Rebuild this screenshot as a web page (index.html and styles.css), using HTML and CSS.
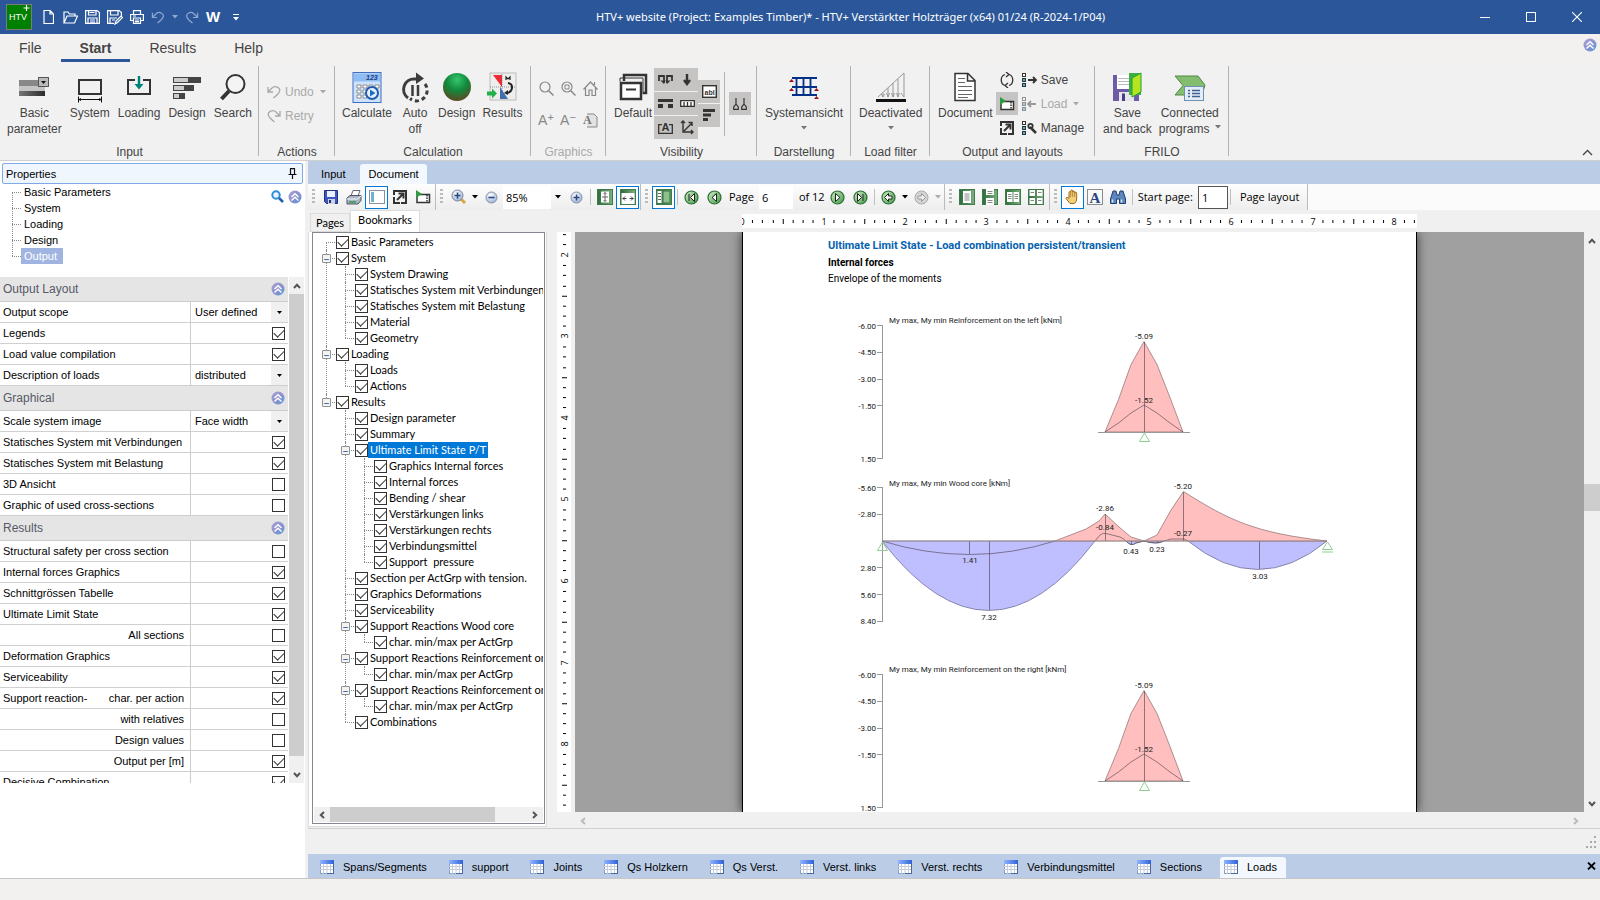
FILE: index.html
```html
<!DOCTYPE html>
<html lang="en">
<head>
    <meta charset="UTF-8">
    <meta name="viewport" content="width=device-width, initial-scale=1.0">
    <title>HTV+ website (Project: Examples Timber)</title>
    <link rel="stylesheet" href="styles.css">
</head>
<body>
    <!-- shared icons -->
    <svg class="sprite" aria-hidden="true">
        <defs>
            <linearGradient id="gBadge" x1="0" y1="0" x2="1" y2="1">
                <stop offset="0" stop-color="#a9a3d6"/><stop offset=".55" stop-color="#8b90cc"/><stop offset="1" stop-color="#4f9fdc"/>
            </linearGradient>
            <linearGradient id="gGreen" x1="0" y1="0" x2="1" y2="1">
                <stop offset="0" stop-color="#d3eec8"/><stop offset="1" stop-color="#3f9a45"/>
            </linearGradient>
            <linearGradient id="gDark" x1="0" y1="0" x2="1" y2="0">
                <stop offset="0" stop-color="#2c6b3a"/><stop offset="1" stop-color="#7db07f"/>
            </linearGradient>
            <linearGradient id="gTable" x1="0" y1="0" x2="1" y2="0">
                <stop offset="0" stop-color="#8fb4ff"/><stop offset="1" stop-color="#2f62d8"/>
            </linearGradient>
            <linearGradient id="gBar" x1="0" y1="0" x2="1" y2="0">
                <stop offset="0" stop-color="#777"/><stop offset="1" stop-color="#2b2b2b"/>
            </linearGradient>
            <radialGradient id="gBall" cx=".5" cy=".25" r=".75">
                <stop offset="0" stop-color="#35c56c"/><stop offset=".5" stop-color="#128a3d"/><stop offset="1" stop-color="#5b4a22"/>
            </radialGradient>
            <radialGradient id="gRound" cx=".4" cy=".3" r=".8">
                <stop offset="0" stop-color="#fff"/><stop offset="1" stop-color="#8fa9d6"/>
            </radialGradient>
        </defs>
        <symbol id="collapse" viewBox="0 0 14 14">
            <circle cx="7" cy="7" r="6.5" fill="url(#gBadge)"/>
            <path d="M3.5 7 7 3.8 10.5 7M3.5 10.5 7 7.3l3.5 3.2" fill="none" stroke="#fff" stroke-width="1.4"/>
        </symbol>
        <symbol id="caret" viewBox="0 0 6 4"><path d="M0 0h6L3 3.5z" fill="currentColor"/></symbol>
        <symbol id="chev" viewBox="0 0 8 6"><path d="M1 5 4 1.8 7 5" fill="none" stroke="currentColor" stroke-width="2"/></symbol>
        <symbol id="undo" viewBox="0 0 14 14">
            <path d="M1 2v5h5M1 7l4-4c3-3 9-.5 7.500 3.500C12 8 9 11 6.500 13" fill="none" stroke="currentColor" stroke-width="1.3"/>
        </symbol>
        <symbol id="redo" viewBox="0 0 14 14">
            <path d="M13 2v5H8M13 7 9 3C6 0 0 2.500 1.500 6.500 2 8 5 11 7.500 13" fill="none" stroke="currentColor" stroke-width="1.3"/>
        </symbol>
        <symbol id="table" viewBox="0 0 14 14">
            <rect x=".5" y=".5" width="13" height="13" fill="#fff" stroke="#8d9fc0"/>
            <rect width="14" height="4" fill="url(#gTable)"/>
            <path d="M0 6.500h14M0 9.500h14M3.500 4v10M7 4v10M10.500 4v10" stroke="#c3ccdc" stroke-width="1"/>
            <path d="M13.500 4v10M7 13.500h7" stroke="#4c6799"/>
        </symbol>
        <symbol id="layout" viewBox="0 0 15 14">
            <g fill="#fff" stroke="#333"><rect x=".5" y=".5" width="3" height="3"/><rect x=".5" y="5.500" width="3" height="3" fill="#4db1e4"/><rect x=".5" y="10.500" width="3" height="3" fill="#4db1e4"/></g>
        </symbol>
        <symbol id="slide" viewBox="0 0 16 14">
            <path d="M5 4.500h9.500v8H2V6" fill="#fff" stroke="#333" stroke-width="1.500"/>
            <path d="M12 5v7" stroke="#333" stroke-width="1.500" stroke-dasharray="1.500 1"/>
            <path d="M1 0v8l6-4z" fill="#2f9a3f"/>
        </symbol>
        <symbol id="popout" viewBox="0 0 14 14">
            <path d="M0 0h14v14H8v-2h4V2H2v3H0z" fill="#333"/>
            <path d="M1 7v6h6" fill="none" stroke="#333" stroke-width="2"/>
            <path d="M5.500 3.500h5v5M10 4l-6 6" fill="none" stroke="#333" stroke-width="2"/>
        </symbol>
        <symbol id="ball" viewBox="0 0 15 15">
            <circle cx="7.500" cy="7.500" r="6.500" fill="url(#gGreen)" stroke="#2c6e34" stroke-width="1.200"/>
        </symbol>
        <symbol id="lens" viewBox="0 0 13 13"><circle cx="6.500" cy="6.500" r="5.500" fill="url(#gRound)" stroke="#8790a3"/></symbol>
        <symbol id="flag" viewBox="0 0 16 16"><rect x=".5" y=".5" width="15" height="15" fill="url(#gDark)" stroke="#3f7a49"/></symbol>
    </svg>

    <header class="titlebar">
        <div class="quick">
            <svg class="app-icon" width="26" height="26" viewBox="0 0 26 26">
                <rect x=".5" y=".5" width="25" height="25" fill="#008000" stroke="#7b7b7b"/>
                <text x="3" y="16" font-size="9" fill="#fff">HTV</text>
                <path d="M20.500 1v6M17.500 4h6" stroke="#fff" stroke-width="1.200"/>
            </svg>
            <button class="q-new" aria-label="New"><svg width="11" height="14" viewBox="0 0 11 14"><path d="M1 .5h6l3.500 3.500v9.500H1zM7 .5V4h3.500" fill="none" stroke="#fff" stroke-width="1.200"/></svg></button>
            <button aria-label="Open"><svg width="15" height="13" viewBox="0 0 15 13"><path d="M1 12V1h4l1.500 2H12v2M1 12l3-7h10.500l-3 7z" fill="none" stroke="#fff" stroke-width="1.200"/></svg></button>
            <button aria-label="Save"><svg width="15" height="14" viewBox="0 0 15 14"><path d="M.6.600h11.500l2.300 2v10.800H.6zM3.500.600V5h7.500V.600M3 13V8h9v5M4.500 2.500h5M5 10h5M5 12h5" fill="none" stroke="#fff" stroke-width="1.200"/></svg></button>
            <button aria-label="Save as"><svg width="16" height="15" viewBox="0 0 16 15"><path d="M7 13.400H.6V.600h11.500l2.300 2V6M3.500.600V5h7.500V.600M3 13V8h7M5 10h3M8 14l1-3 5-5 1.500 1.500-5 5z" fill="none" stroke="#fff" stroke-width="1.200"/></svg></button>
            <button aria-label="Print"><svg width="14" height="14" viewBox="0 0 14 14"><path d="M3.500 4V.600h7V4M3 10.500H.6V4.500h12.800v6H11M3.500 8h7v5.400h-7zM5 10h4M5 11.700h4M3 6h3" fill="none" stroke="#fff" stroke-width="1.200"/></svg></button>
            <button class="dim" aria-label="Undo"><svg width="14" height="13"><use href="#undo"/></svg><svg width="6" height="4"><use href="#caret"/></svg></button>
            <button class="dim" aria-label="Redo"><svg width="14" height="13"><use href="#redo"/></svg></button>
            <button class="word" aria-label="Word">W</button>
            <button class="q-more" aria-label="Customize"><svg width="6" height="7" viewBox="0 0 6 7"><path d="M0 .5h6" stroke="#fff"/><path d="M0 3h6L3 6.500z" fill="#fff"/></svg></button>
        </div>
        <div class="window-title">HTV+ website (Project: Examples Timber)* - HTV+ Verstärkter Holzträger (x64) 01/24 (R-2024-1/P04)</div>
        <div class="window-buttons">
            <button aria-label="Minimize"><svg width="10" height="10"><path d="M0 5.500h10" stroke="#fff"/></svg></button>
            <button aria-label="Maximize"><svg width="10" height="10"><rect x=".5" y=".5" width="9" height="9" fill="none" stroke="#fff"/></svg></button>
            <button aria-label="Close"><svg width="10" height="10"><path d="M0 0l10 10M10 0 0 10" stroke="#fff" stroke-width="1.100"/></svg></button>
        </div>
    </header>

    <nav class="ribbon-tabs">
        <a href="#file">File</a>
        <a href="#start" class="active">Start</a>
        <a href="#results">Results</a>
        <a href="#help">Help</a>
        <button class="ribbon-help" aria-label="Collapse"><svg width="14" height="14"><use href="#collapse"/></svg></button>
    </nav>

    <div class="ribbon">
        <section class="group g-input">
            <div class="group-body">
                <button class="big"><svg width="32" height="32" viewBox="0 0 32 32"><rect x="1" y="9" width="26" height="6" fill="#888"/><rect x="1" y="15" width="26" height="5" fill="#c4c4c4"/><rect x="1" y="20" width="26" height="5" fill="url(#gBar)"/><rect x="20.500" y="6.500" width="10" height="9" fill="#bbb" stroke="#555"/><path d="M23 10h5l-2.500 3z" fill="#111"/></svg>Basic<br>parameter</button>
                <button class="big"><svg width="32" height="32" viewBox="0 0 32 32"><rect x="5" y="9" width="22" height="14" fill="none" stroke="#333" stroke-width="2"/><path d="M4 28.500h24M4.500 25.500v6M27.500 25.500v6" stroke="#111"/><path d="M4 28.500l3-1.500v3zM28 28.500l-3-1.500v3z" fill="#111"/></svg>System</button>
                <button class="big"><svg width="32" height="32" viewBox="0 0 32 32"><path d="M12 9H5v14h22V9h-7" fill="none" stroke="#333" stroke-width="2"/><path d="M14.800 5h2.400v8h3.300L16 18.500 11.500 13h3.300z" fill="#00827c"/></svg>Loading</button>
                <button class="big"><svg width="32" height="32" viewBox="0 0 32 32"><g stroke="#444"><rect x="2.500" y="6.500" width="27" height="5" fill="#444"/><rect x="2.500" y="6.500" width="15" height="5" fill="#ccc"/><rect x="2.500" y="14.500" width="20" height="5" fill="#444"/><rect x="2.500" y="14.500" width="11" height="5" fill="#ccc"/><rect x="2.500" y="22.500" width="11" height="5" fill="#444"/><rect x="2.500" y="22.500" width="6" height="5" fill="#ccc"/></g></svg>Design</button>
                <button class="big"><svg width="32" height="32" viewBox="0 0 32 32"><circle cx="18.500" cy="13" r="9" fill="#f4f4f4" stroke="#333" stroke-width="2"/><path d="M12 20 4.500 28" stroke="#333" stroke-width="4"/></svg>Search</button>
            </div>
            <h2>Input</h2>
        </section>

        <section class="group g-actions">
            <div class="group-body">
                <div class="rows tall">
                    <button disabled><svg width="14" height="14"><use href="#undo"/></svg>Undo<svg class="gap" width="6" height="4"><use href="#caret"/></svg></button>
                    <button disabled><svg width="14" height="14"><use href="#redo"/></svg>Retry</button>
                </div>
            </div>
            <h2>Actions</h2>
        </section>

        <section class="group g-calc">
            <div class="group-body">
                <button class="big"><svg width="32" height="32" viewBox="0 0 32 32"><rect x="2" y="1.500" width="28" height="30" fill="#cfe2fb" stroke="#3c6fc4"/><rect x="3" y="2.500" width="26" height="8" fill="#8fbcf5"/><text x="15" y="9" font-size="7" font-weight="bold" font-style="italic" fill="#1d3c7c">123</text><g fill="#fff" stroke="#777" stroke-width=".8"><path d="M6 14h4v3H6zM12 14h4v3h-4zM18 14h4v3h-4zM24 14h4v3h-4zM6 19h4v3H6zM12 19h4v3h-4zM6 24h4v3H6zM12 24h4v3h-4z"/></g><circle cx="21" cy="22" r="6" fill="#e5f2ff" stroke="#245cac" stroke-width="2"/><path d="M19 18.500v7l5.500-3.500z" fill="#1d6ec4"/></svg>Calculate</button>
                <button class="big"><svg width="32" height="32" viewBox="0 0 32 32"><path d="M9 27A10.500 10.500 0 0 1 16 8h3" fill="none" stroke="#3c3c3c" stroke-width="3"/><path d="M17 1.500 25 7.500 17 13z" fill="#3c3c3c"/><path d="M26 13a10.500 10.500 0 0 1-15 14.500" fill="none" stroke="#3c3c3c" stroke-width="3" stroke-dasharray="4 3"/><path d="M13.500 14v11M19 14v11" stroke="#3c3c3c" stroke-width="2.500"/></svg>Auto<br>off</button>
                <button class="big"><svg width="32" height="32" viewBox="0 0 32 32"><circle cx="16" cy="16" r="14" fill="url(#gBall)"/></svg>Design</button>
                <button class="big"><svg width="32" height="32" viewBox="0 0 32 32"><rect x="4" y="2" width="26" height="27" fill="#efeeec" stroke="#bbb"/><path d="M7 4h9v12z" fill="#ee2b35"/><path d="M14 16v12h8z" fill="#3d70b5"/><path d="M16 3v26M4 16h26" stroke="#555" stroke-width=".6" stroke-dasharray="1 1"/><path d="M22 12c6 1 5 9-1 10" fill="none" stroke="#222" stroke-width="2"/><path d="M18 22l4-3v5z" fill="#222"/><path d="M20 9V6l2 2 2-2v3" fill="none" stroke="#222" stroke-width="1.200"/><path d="M1 20.500h5v-3l5 5-5 5v-3H1z" fill="#20b14b"/></svg>Results</button>
            </div>
            <h2>Calculation</h2>
        </section>

        <section class="group g-graphics">
            <div class="group-body">
                <div class="icon-grid">
                    <button disabled aria-label="Zoom"><svg width="15" height="15" viewBox="0 0 15 15"><circle cx="6" cy="6" r="5" fill="none" stroke="#888" stroke-width="1.200"/><path d="M9.500 9.500l5 5" stroke="#888" stroke-width="1.500"/></svg></button>
                    <button disabled aria-label="Zoom window"><svg width="15" height="15" viewBox="0 0 15 15"><circle cx="6" cy="6" r="5" fill="none" stroke="#888" stroke-width="1.200"/><path d="M4 4h4v4H4z" fill="none" stroke="#888"/><path d="M9.500 9.500l5 5" stroke="#888" stroke-width="1.500"/></svg></button>
                    <button disabled aria-label="Home"><svg width="15" height="15" viewBox="0 0 15 15"><path d="M.5 8.500 7.500 1l7 7.500M2.500 7v7.500H6V9h3v5.500h3.500V7M11.500 1v3" fill="none" stroke="#888" stroke-width="1.200"/></svg></button>
                    <button disabled class="letter">A<sup>+</sup></button>
                    <button disabled class="letter">A<sup>−</sup></button>
                    <button disabled aria-label="Font page"><svg width="15" height="15" viewBox="0 0 15 15"><path d="M4 1h7l3 3v10H4" fill="#e2e2e2" stroke="#888"/><text x="0" y="11" font-size="12" font-weight="bold" font-family="Liberation Serif" fill="#777">A</text></svg></button>
                </div>
            </div>
            <h2 class="off">Graphics</h2>
        </section>

        <section class="group g-vis">
            <div class="group-body">
                <button class="big"><svg width="32" height="32" viewBox="0 0 32 32"><rect x="7" y="4" width="22" height="18" fill="none" stroke="#333" stroke-width="2.500"/><rect x="2" y="10" width="24" height="20" fill="#f1f1f1"/><rect x="4" y="12" width="20" height="16" fill="#fff" stroke="#333" stroke-width="2.500"/><path d="M3 10.500V7h23v16" fill="none" stroke="#333"/><path d="M9 18.500h10" stroke="#333" stroke-width="2"/></svg>Default</button>
                <div class="toggles two">
                    <button aria-label="Loads"><svg width="15" height="12" viewBox="0 0 15 12"><path d="M1 7V2h5v7M9 9V2h5v5" fill="none" stroke="#333" stroke-width="1.800"/><path d="M2.500 6.500h5L6 10zM7.500 6.500h5L9 10z" fill="#333"/></svg></button>
                    <button aria-label="Point load"><svg width="8" height="12" viewBox="0 0 8 12"><path d="M4 0v9M1 6l3 4 3-4" fill="none" stroke="#333" stroke-width="2.400"/></svg></button>
                    <button aria-label="Supports"><svg width="15" height="9" viewBox="0 0 15 9"><path d="M0 1.500h15" stroke="#333" stroke-width="3"/><path d="M0 5h5v4H0zM10 5h5v4h-5z" fill="#333"/></svg></button>
                    <button aria-label="Dimensions"><svg width="15" height="7" viewBox="0 0 15 7"><path d="M.7.700h13.600v5.600H.7zM4 2v4M7.500 2v4M11 2v4" fill="#fff" stroke="#333" stroke-width="1.300"/></svg></button>
                    <button aria-label="Labels"><svg width="15" height="13" viewBox="0 0 15 13"><path d="M4 3.700H.7v8.600h13.600V3.700H11" fill="none" stroke="#333" stroke-width="1.300"/><text x="3.500" y="9.500" font-size="11" font-weight="bold" fill="#333">A</text></svg></button>
                    <button aria-label="Axes"><svg width="14" height="15" viewBox="0 0 14 15"><path d="M3 1v11h10M1 3l2-2 2 2M11 10l2 2-2 2M4 11l8-8M8.500 2.500H12V6" fill="none" stroke="#333" stroke-width="1.400"/></svg></button>
                </div>
                <div class="toggles one">
                    <button aria-label="Text"><svg width="15" height="13" viewBox="0 0 15 13"><rect x=".7" y=".7" width="13.600" height="11.600" fill="#fff" stroke="#333" stroke-width="1.400"/><text x="2.500" y="9.500" font-size="7" font-weight="bold" fill="#333">abl</text></svg></button>
                    <button aria-label="Utilization"><svg width="12" height="13" viewBox="0 0 12 13"><path d="M0 1.500h12M0 6h8M0 10.500h5" stroke="#333" stroke-width="3"/></svg></button>
                </div>
                <span class="short-rule"></span>
                <div class="toggles lone">
                    <button aria-label="Spacing"><svg width="14" height="12" viewBox="0 0 14 12"><path d="M3 0v6l-2.300 3v2.300h4.600V9L3 6M11 0v6l-2.300 3v2.300h4.600V9L11 6" fill="none" stroke="#333" stroke-width="1.200"/></svg></button>
                </div>
            </div>
            <h2>Visibility</h2>
        </section>

        <section class="group g-view">
            <div class="group-body">
                <button class="big"><svg width="32" height="32" viewBox="0 0 32 32"><path d="M4 7h25M4 16h25M4 24h25M8.500 7v17M15.500 7v17M22.500 7v17" stroke="#003087" stroke-width="1.800"/><path d="M1 11l2.500-3L6 11zM1 20l2.500-3L6 20zM26 20l2.500-3 2.500 3zM26 28l2.500-3 2.500 3z" fill="#a1101c"/></svg>Systemansicht<svg class="drop" width="6" height="4"><use href="#caret"/></svg></button>
            </div>
            <h2>Darstellung</h2>
        </section>

        <section class="group g-filter">
            <div class="group-body">
                <button class="big"><svg width="32" height="32" viewBox="0 0 32 32"><path d="M3 26 29 2v24M8 22v4M13 17v9M18 12v14M23 8v18M6.500 23l1.500 3 1.500-3M11.500 22l1.500 4 1.500-4M16.500 22l1.500 4 1.500-4M21.500 22l1.500 4 1.500-4M26 22l3 4" fill="none" stroke="#999"/><path d="M1 29.500h30" stroke="#111" stroke-width="3"/></svg>Deactivated<svg class="drop" width="6" height="4"><use href="#caret"/></svg></button>
            </div>
            <h2>Load filter</h2>
        </section>

        <section class="group g-output">
            <div class="group-body">
                <button class="big"><svg width="32" height="32" viewBox="0 0 32 32"><path d="M6 2.500h13l7 7v20H6zM18.500 3v7h7" fill="#fff" stroke="#333" stroke-width="1.500"/><path d="M9 7.500h7M9 11.500h7M9 15.500h14M9 19.500h14M9 23.500h14M9 26.500h10" stroke="#666"/></svg>Document</button>
                <div class="toggles plain">
                    <button aria-label="Refresh"><svg width="14" height="16" viewBox="0 0 14 16"><path d="M5 2.500C0 4 0 12 5 13.500M9 2.500c5 1.500 5 9.500 0 11M6 0l3 2.500L6 5M8 11l-3 2.500L8 16" fill="none" stroke="#333" stroke-width="1.300"/></svg></button>
                    <button class="on" aria-label="Slide"><svg width="16" height="14"><use href="#slide"/></svg></button>
                    <button aria-label="Pop out"><svg width="14" height="14"><use href="#popout"/></svg></button>
                </div>
                <div class="rows">
                    <button><svg width="15" height="14" viewBox="0 0 15 14"><use href="#layout" width="15" height="14"/><path d="M6 7h8M11 4l3 3-3 3" fill="none" stroke="#333" stroke-width="1.800"/></svg>Save</button>
                    <button disabled><svg width="15" height="14" viewBox="0 0 15 14"><use href="#layout" width="15" height="14" opacity=".5"/><path d="M14 7H6M9 4 6 7l3 3" fill="none" stroke="#999" stroke-width="1.800"/></svg>Load<svg class="gap" width="6" height="4"><use href="#caret"/></svg></button>
                    <button><svg width="15" height="14" viewBox="0 0 15 14"><use href="#layout" width="15" height="14"/><path d="M8 6l6 6" stroke="#333" stroke-width="2.500"/><circle cx="8.500" cy="5" r="2.200" fill="none" stroke="#333" stroke-width="1.800"/></svg>Manage</button>
                </div>
            </div>
            <h2>Output and layouts</h2>
        </section>

        <section class="group g-frilo">
            <div class="group-body">
                <button class="big"><svg width="32" height="32" viewBox="0 0 32 32"><path d="M2 4h26v26H2z" fill="#6f5aa8"/><rect x="6" y="4" width="17" height="14" fill="#fff"/><path d="M7 7.500h13M7 10.500h13M7 13.500h13" stroke="#bbb"/><rect x="8" y="21" width="15" height="9" fill="#e5e5ea"/><path d="M11 22.500h3V30h-3z" fill="#4b3a86"/><path d="M18 2h12v22H18z" fill="#3cb043"/><path d="M21 7l9-5v19l-9 5z" fill="#b5e61d" stroke="#1f9e3c"/></svg>Save<br>and back</button>
                <button class="big"><svg width="32" height="32" viewBox="0 0 32 32"><path d="M1 5h23l7 9-3 10H1l8-9.500z" fill="#84bd6f" stroke="#4d8a41"/><rect x="10.500" y="15.500" width="19" height="14" fill="#e4edf7" stroke="#6d90b6"/><path d="M14 19.500h2M18 19.500h8M14 22.500h2M18 22.500h8M14 25.500h2M18 25.500h8" stroke="#3f5f8f" stroke-width="1.300"/></svg>Connected<span>programs <svg width="6" height="8" viewBox="0 0 6 8"><path d="M0 0h6L3 3.500z" fill="#777"/></svg></span></button>
            </div>
            <h2>FRILO</h2>
        </section>
        <button class="ribbon-fold" aria-label="Fold ribbon"><svg width="11" height="7" viewBox="0 0 11 7"><path d="M1 6l4.500-4.500L10 6" fill="none" stroke="#444" stroke-width="1.300"/></svg></button>
    </div>

    <main>
        <aside class="properties">
            <div class="prop-head">Properties<svg width="9" height="11" viewBox="0 0 9 11"><path d="M2.500.500v5.500M6.500.500V6M2 .7h5M.5 6.500h8M4.500 7v4" stroke="#111" stroke-width="1.200" fill="none"/></svg></div>
            <div class="prop-nav">
                <ul>
                    <li><a href="#basic">Basic Parameters</a></li>
                    <li><a href="#system">System</a></li>
                    <li><a href="#loading">Loading</a></li>
                    <li><a href="#design">Design</a></li>
                    <li><a href="#output" class="current">Output</a></li>
                </ul>
                <button aria-label="Find"><svg width="13" height="13" viewBox="0 0 13 13"><circle cx="5" cy="5" r="3.700" fill="#eaf5ff" stroke="#2b8bdc" stroke-width="2"/><path d="M8 8l4 4" stroke="#1f5fb0" stroke-width="2.500"/></svg></button>
                <button aria-label="Collapse all"><svg width="14" height="14"><use href="#collapse"/></svg></button>
            </div>
            <div class="prop-scroll">
                <form class="prop-grid">
                    <h3>Output Layout<svg width="14" height="14"><use href="#collapse"/></svg></h3>
                    <div class="prop"><label for="p1">Output scope</label><select id="p1"><option>User defined</option></select></div>
                    <div class="prop"><label for="p2">Legends</label><input type="checkbox" id="p2" checked></div>
                    <div class="prop"><label for="p3">Load value compilation</label><input type="checkbox" id="p3" checked></div>
                    <div class="prop"><label for="p4">Description of loads</label><select id="p4"><option>distributed</option></select></div>
                    <h3>Graphical<svg width="14" height="14"><use href="#collapse"/></svg></h3>
                    <div class="prop"><label for="p5">Scale system image</label><select id="p5"><option>Face width</option></select></div>
                    <div class="prop"><label for="p6">Statisches System mit Verbindungen</label><input type="checkbox" id="p6" checked></div>
                    <div class="prop"><label for="p7">Statisches System mit Belastung</label><input type="checkbox" id="p7" checked></div>
                    <div class="prop"><label for="p8">3D Ansicht</label><input type="checkbox" id="p8"></div>
                    <div class="prop"><label for="p9">Graphic of used cross-sections</label><input type="checkbox" id="p9"></div>
                    <h3>Results<svg width="14" height="14"><use href="#collapse"/></svg></h3>
                    <div class="prop"><label for="p10">Structural safety per cross section</label><input type="checkbox" id="p10"></div>
                    <div class="prop"><label for="p11">Internal forces Graphics</label><input type="checkbox" id="p11" checked></div>
                    <div class="prop"><label for="p12">Schnittgrössen Tabelle</label><input type="checkbox" id="p12" checked></div>
                    <div class="prop"><label for="p13">Ultimate Limit State</label><input type="checkbox" id="p13" checked></div>
                    <div class="prop sub"><label for="p14">All sections</label><input type="checkbox" id="p14"></div>
                    <div class="prop"><label for="p15">Deformation Graphics</label><input type="checkbox" id="p15" checked></div>
                    <div class="prop"><label for="p16">Serviceability</label><input type="checkbox" id="p16" checked></div>
                    <div class="prop pair"><label for="p17"><span>Support reaction-</span><span>char. per action</span></label><input type="checkbox" id="p17" checked></div>
                    <div class="prop sub"><label for="p18">with relatives</label><input type="checkbox" id="p18"></div>
                    <div class="prop sub"><label for="p19">Design values</label><input type="checkbox" id="p19"></div>
                    <div class="prop sub"><label for="p20">Output per [m]</label><input type="checkbox" id="p20" checked></div>
                    <div class="prop"><label for="p21">Decisive Combination</label><input type="checkbox" id="p21" checked></div>
                </form>
                <div class="scroll vertical">
                    <button aria-label="Scroll up"><svg width="8" height="6"><use href="#chev"/></svg></button>
                    <span class="thumb" style="flex-grow: 463"></span>
                    <span style="flex-grow: 10"></span>
                    <button class="down" aria-label="Scroll down"><svg width="8" height="6"><use href="#chev"/></svg></button>
                </div>
            </div>
        </aside>

        <section class="workspace">
            <nav class="view-tabs">
                <a href="#input">Input</a>
                <a href="#document" class="active">Document</a>
            </nav>

            <div class="toolbar">
                <div class="tools">
                    <button aria-label="Save"><svg width="14" height="14" viewBox="0 0 14 14"><path d="M.5.500h13v13h-11l-2-2z" fill="#3f55c0" stroke="#20307c"/><rect x="3" y="1" width="8" height="6" fill="#e9f0ff"/><rect x="4" y="9" width="7" height="5" fill="#cdd3e3"/><path d="M5 10h2v3H5z" fill="#20307c"/></svg></button>
                    <button aria-label="Print"><svg width="16" height="15" viewBox="0 0 16 15"><path d="M5 6l2-5.500h7L12 6z" fill="#fff" stroke="#667"/><path d="M1 8l3-2.500h11v5L12 14H1z" fill="#a9b4c4" stroke="#4c5666"/><path d="M1 9h10.500L15 6" fill="none" stroke="#fff"/><path d="M3 12h7" stroke="#3b9a4a" stroke-width="1.500"/></svg></button>
                    <button class="on" aria-label="Side pane"><svg width="16" height="14" viewBox="0 0 16 14"><rect x=".5" y=".5" width="15" height="13" fill="#fff" stroke="#8a9098"/><rect x="2" y="2" width="3" height="10" fill="#6fb2d8"/></svg></button>
                    <button aria-label="Pop out"><svg width="14" height="14"><use href="#popout"/></svg></button>
                    <button aria-label="Slide"><svg width="16" height="14"><use href="#slide"/></svg></button>
                </div>
                <div class="tools">
                    <button aria-label="Zoom in"><svg width="16" height="16" viewBox="0 0 16 16"><path d="M10 10l4 4" stroke="#d9a441" stroke-width="3"/><circle cx="6.500" cy="6.500" r="5.500" fill="url(#gRound)" stroke="#7b87a0"/><path d="M6.500 3.500v6M3.500 6.500h6" stroke="#2a4a7c" stroke-width="1.600"/></svg></button>
                    <button class="arrow" aria-label="Zoom menu"><svg width="6" height="4"><use href="#caret"/></svg></button>
                    <button aria-label="Smaller"><svg width="13" height="13" viewBox="0 0 13 13"><use href="#lens" width="13" height="13"/><path d="M3.500 6.500h6" stroke="#2a4a7c" stroke-width="1.600"/></svg></button>
                    <input class="zoom" value="85%" aria-label="Zoom">
                    <button class="arrow wide" aria-label="Zoom values"><svg width="6" height="4"><use href="#caret"/></svg></button>
                    <button aria-label="Larger"><svg width="13" height="13" viewBox="0 0 13 13"><use href="#lens" width="13" height="13"/><path d="M6.500 3.500v6M3.500 6.500h6" stroke="#2a4a7c" stroke-width="1.600"/></svg></button>
                    <i></i>
                    <button aria-label="Fit page"><svg width="16" height="16" viewBox="0 0 16 16"><use href="#flag" width="16" height="16"/><rect x="4" y="2.500" width="8" height="11" fill="#fff"/><path d="M8 3.500v9M5 8h6M6.500 5 8 3.500 9.500 5M6.500 11 8 12.500 9.500 11" fill="none" stroke="#666"/></svg></button>
                    <button class="on" aria-label="Fit width"><svg width="16" height="16" viewBox="0 0 16 16"><use href="#flag" width="16" height="16"/><rect x="1.500" y="4" width="13" height="11" fill="#fff"/><path d="M2.500 9.500h4M9.500 9.500h4M5 7.500l-2 2 2 2M11 7.500l2 2-2 2" fill="none" stroke="#444"/></svg></button>
                </div>
                <div class="tools">
                    <button class="on" aria-label="Thumbnails"><svg width="16" height="16" viewBox="0 0 16 16"><use href="#flag" width="16" height="16"/><rect x="1.500" y="2" width="4" height="12" fill="#fff"/><path d="M2 4.500h3M2 7.500h3M2 10.500h3" stroke="#666"/><rect x="7" y="2" width="7" height="12" fill="#8cc08c" stroke="#356e3e"/></svg></button>
                    <i></i>
                    <button aria-label="First page"><svg width="15" height="15" viewBox="0 0 15 15"><use href="#ball" width="15" height="15"/><path d="M5 4v7M10.500 3.500 6.500 7.500l4 4z" fill="#fff" stroke="#222"/></svg></button>
                    <button aria-label="Previous page"><svg width="15" height="15" viewBox="0 0 15 15"><use href="#ball" width="15" height="15"/><path d="M9.500 3.500 5 7.500l4.500 4z" fill="#fff" stroke="#222"/></svg></button>
                    <label for="page">Page</label>
                    <input id="page" class="page-no" value="6">
                    <span class="of">of 12</span>
                    <button aria-label="Next page"><svg width="15" height="15" viewBox="0 0 15 15"><use href="#ball" width="15" height="15"/><path d="M5.500 3.500 10 7.500l-4.500 4z" fill="#fff" stroke="#222"/></svg></button>
                    <button aria-label="Last page"><svg width="15" height="15" viewBox="0 0 15 15"><use href="#ball" width="15" height="15"/><path d="M10 4v7M4.500 3.500l4 4-4 4z" fill="#fff" stroke="#222"/></svg></button>
                    <i></i>
                    <button aria-label="Back"><svg width="15" height="15" viewBox="0 0 15 15"><use href="#ball" width="15" height="15"/><path d="M7.500 3.500l-4 4 4 4V9H11V6H7.500z" fill="#fff" stroke="#222"/></svg></button>
                    <button class="arrow" aria-label="History"><svg width="6" height="4"><use href="#caret"/></svg></button>
                    <button disabled aria-label="Forward"><svg width="15" height="15" viewBox="0 0 15 15"><circle cx="7.500" cy="7.500" r="6.500" fill="#d5d5d5" stroke="#aaa"/><path d="M7.500 3.500l4 4-4 4V9H4V6h3.500z" fill="#eee" stroke="#999"/></svg></button>
                    <button disabled class="arrow" aria-label="Forward history"><svg width="6" height="4"><use href="#caret"/></svg></button>
                </div>
                <div class="tools">
                    <button aria-label="Single page"><svg width="16" height="16" viewBox="0 0 16 16"><use href="#flag" width="16" height="16"/><rect x="4" y="2" width="8" height="12" fill="#fff"/><path d="M5.500 5h5M5.500 7h5M5.500 9h5M5.500 11h5" stroke="#888"/></svg></button>
                    <button aria-label="Continuous"><svg width="16" height="16" viewBox="0 0 16 16"><use href="#flag" width="16" height="16"/><path d="M4 0h8v6H4zM4 9h8v7H4z" fill="#fff"/><path d="M5.500 2.500h5M5.500 4.500h5M5.500 11.500h5M5.500 13.500h5" stroke="#888"/></svg></button>
                    <button aria-label="Two pages"><svg width="16" height="16" viewBox="0 0 16 16"><use href="#flag" width="16" height="16"/><path d="M2 3h5.500v10H2zM8.500 3H14v10H8.500z" fill="#fff"/><path d="M3 5.500h3.500M3 7.500h3.500M3 9.500h3.500M9.500 5.500H13M9.500 7.500H13M9.500 9.500H13" stroke="#888"/></svg></button>
                    <button aria-label="Four pages"><svg width="16" height="16" viewBox="0 0 16 16"><use href="#flag" width="16" height="16"/><path d="M1.500 1H7v6H1.500zM9 1h5.500v6H9zM1.500 9H7v6H1.500zM9 9h5.500v6H9z" fill="#fff"/><path d="M2.500 3.500H6M10 3.500h3.500M2.500 11.500H6M10 11.500h3.500" stroke="#888"/></svg></button>
                </div>
                <div class="tools">
                    <button class="on" aria-label="Hand"><svg width="15" height="16" viewBox="0 0 15 16"><path d="M5 14.500 1 9.500c0-1.500 1.500-1.500 3 0V3.500c0-1.300 1.700-1.300 1.700 0V2c0-1.300 2-1.300 2 0v1c0-1.300 2-1.300 2 0v1.200c0-1.300 2-1.300 2 0V9c0 3-1 5-2.700 5.500z" fill="#f5cf78" stroke="#9a6c1c"/><path d="M5.700 4v4M7.700 3v5M9.700 4v4" stroke="#9a6c1c" stroke-width=".7"/></svg></button>
                    <button aria-label="Select text"><svg width="16" height="16" viewBox="0 0 16 16"><rect x=".5" y=".5" width="15" height="15" fill="#f8f8f8" stroke="#222" stroke-dasharray="1 1"/><text x="2.500" y="13.500" font-size="15" font-weight="bold" font-family="Liberation Serif" fill="#27457f">A</text></svg></button>
                    <button aria-label="Find"><svg width="16" height="14" viewBox="0 0 16 14"><path d="M3 1h3l1 4h2l1-4h3l2.500 8v4.500H9.500V9h-3v4.500H.5V9z" fill="#5c86bd" stroke="#1f3d73"/><path d="M2.500 9.500v3M11.500 9.500v3" stroke="#dce9fa" stroke-width="1.500"/></svg></button>
                    <i></i>
                    <label for="start">Start page:</label>
                    <input id="start" class="start-no" value="1">
                    <i></i>
                    <button class="text">Page layout</button>
                </div>
            </div>

            <div class="viewer">
                <div class="side-pane">
                    <nav class="side-tabs">
                        <a href="#pages">Pages</a>
                        <a href="#bookmarks" class="active">Bookmarks</a>
                    </nav>
                    <div class="side-frame">
                        <div class="tree-box">
                            <ul class="tree">
                                <li><div class="node"><input type="checkbox" id="b1" checked><label for="b1">Basic Parameters</label></div></li>
                                <li><div class="node"><button aria-label="Fold">−</button><input type="checkbox" id="b2" checked><label for="b2">System</label></div>
                                    <ul>
                                        <li><div class="node"><input type="checkbox" id="b3" checked><label for="b3">System Drawing</label></div></li>
                                        <li><div class="node"><input type="checkbox" id="b4" checked><label for="b4">Statisches System mit Verbindungen</label></div></li>
                                        <li><div class="node"><input type="checkbox" id="b5" checked><label for="b5">Statisches System mit Belastung</label></div></li>
                                        <li><div class="node"><input type="checkbox" id="b6" checked><label for="b6">Material</label></div></li>
                                        <li><div class="node"><input type="checkbox" id="b7" checked><label for="b7">Geometry</label></div></li>
                                    </ul>
                                </li>
                                <li><div class="node"><button aria-label="Fold">−</button><input type="checkbox" id="b8" checked><label for="b8">Loading</label></div>
                                    <ul>
                                        <li><div class="node"><input type="checkbox" id="b9" checked><label for="b9">Loads</label></div></li>
                                        <li><div class="node"><input type="checkbox" id="b10" checked><label for="b10">Actions</label></div></li>
                                    </ul>
                                </li>
                                <li><div class="node"><button aria-label="Fold">−</button><input type="checkbox" id="b11" checked><label for="b11">Results</label></div>
                                    <ul>
                                        <li><div class="node"><input type="checkbox" id="b12" checked><label for="b12">Design parameter</label></div></li>
                                        <li><div class="node"><input type="checkbox" id="b13" checked><label for="b13">Summary</label></div></li>
                                        <li><div class="node"><button aria-label="Fold">−</button><input type="checkbox" id="b14" checked><label for="b14" class="picked">Ultimate Limit State P/T</label></div>
                                            <ul>
                                                <li><div class="node"><input type="checkbox" id="b15" checked><label for="b15">Graphics Internal forces</label></div></li>
                                                <li><div class="node"><input type="checkbox" id="b16" checked><label for="b16">Internal forces</label></div></li>
                                                <li><div class="node"><input type="checkbox" id="b17" checked><label for="b17">Bending / shear</label></div></li>
                                                <li><div class="node"><input type="checkbox" id="b18" checked><label for="b18">Verstärkungen links</label></div></li>
                                                <li><div class="node"><input type="checkbox" id="b19" checked><label for="b19">Verstärkungen rechts</label></div></li>
                                                <li><div class="node"><input type="checkbox" id="b20" checked><label for="b20">Verbindungsmittel</label></div></li>
                                                <li><div class="node"><input type="checkbox" id="b21" checked><label for="b21">Support&nbsp; pressure</label></div></li>
                                            </ul>
                                        </li>
                                        <li><div class="node"><input type="checkbox" id="b22" checked><label for="b22">Section per ActGrp with tension.</label></div></li>
                                        <li><div class="node"><input type="checkbox" id="b23" checked><label for="b23">Graphics Deformations</label></div></li>
                                        <li><div class="node"><input type="checkbox" id="b24" checked><label for="b24">Serviceability</label></div></li>
                                        <li><div class="node"><button aria-label="Fold">−</button><input type="checkbox" id="b25" checked><label for="b25">Support Reactions Wood core</label></div>
                                            <ul><li><div class="node"><input type="checkbox" id="b26" checked><label for="b26">char. min/max per ActGrp</label></div></li></ul>
                                        </li>
                                        <li><div class="node"><button aria-label="Fold">−</button><input type="checkbox" id="b27" checked><label for="b27">Support Reactions Reinforcement on</label></div>
                                            <ul><li><div class="node"><input type="checkbox" id="b28" checked><label for="b28">char. min/max per ActGrp</label></div></li></ul>
                                        </li>
                                        <li><div class="node"><button aria-label="Fold">−</button><input type="checkbox" id="b29" checked><label for="b29">Support Reactions Reinforcement on</label></div>
                                            <ul><li><div class="node"><input type="checkbox" id="b30" checked><label for="b30">char. min/max per ActGrp</label></div></li></ul>
                                        </li>
                                        <li><div class="node"><input type="checkbox" id="b31" checked><label for="b31">Combinations</label></div></li>
                                    </ul>
                                </li>
                            </ul>
                            <div class="scroll horizontal">
                                <button class="left" aria-label="Scroll left"><svg width="8" height="6"><use href="#chev"/></svg></button>
                                <span class="thumb" style="flex-grow: 163"></span>
                                <span style="flex-grow: 32"></span>
                                <button class="right" aria-label="Scroll right"><svg width="8" height="6"><use href="#chev"/></svg></button>
                            </div>
                        </div>
                    </div>
                </div>

                <div class="sheet-area">
                    <div class="ruler-top">
                        <svg width="675" height="14">
                            <defs><pattern id="inchH" width="81.500" height="14" patternUnits="userSpaceOnUse"><path d="M10.500 5.500v3M20.500 5.500v3M31 5.500v3M51 5.500v3M61.500 5.500v3M71.500 5.500v3" stroke="#000"/><path d="M41 5v5" stroke="#000"/></pattern></defs>
                            <rect width="675" height="14" fill="url(#inchH)"/>
                            <text x="0" y="11">0</text><text x="82" y="11">1</text><text x="163" y="11">2</text><text x="244" y="11">3</text><text x="326" y="11">4</text><text x="407" y="11">5</text><text x="489" y="11">6</text><text x="571" y="11">7</text><text x="652" y="11">8</text>
                        </svg>
                    </div>
                    <div class="ruler-left">
                        <svg width="14" height="100%">
                            <defs><pattern id="inchV" y="23" width="14" height="81.500" patternUnits="userSpaceOnUse"><path d="M6 10.500h3M6 20.500h3M6 31h3M6 51h3M6 61.500h3M6 71.500h3" stroke="#000"/><path d="M5 41h5" stroke="#000"/></pattern></defs>
                            <rect width="14" height="100%" fill="url(#inchV)"/>
                            <text transform="translate(11 23) rotate(-90)">2</text><text transform="translate(11 104) rotate(-90)">3</text><text transform="translate(11 186) rotate(-90)">4</text><text transform="translate(11 267) rotate(-90)">5</text><text transform="translate(11 349) rotate(-90)">6</text><text transform="translate(11 431) rotate(-90)">7</text><text transform="translate(11 512) rotate(-90)">8</text>
                        </svg>
                    </div>
                    <div class="canvas">
                        <article class="page">
                            <h1>Ultimate Limit State - Load combination persistent/transient</h1>
                            <h2>Internal forces</h2>
                            <p>Envelope of the moments</p>
                            <svg class="charts" width="500" height="524" viewBox="840 288 500 524">
                                <text class="caption" x="889" y="323">My max, My min Reinforcement on the left [kNm]</text>
                                <g id="reinforcement">
                                    <path class="axis" d="M882.500 325.500V459M877 325.500h6M877 352.500h6M877 379.500h6M877 405.500h6M877 458.500h6"/>
                                    <g class="scale"><text x="876" y="329">-6.00</text><text x="876" y="355">-4.50</text><text x="876" y="382">-3.00</text><text x="876" y="409">-1.50</text><text x="876" y="462">1.50</text></g>
                                    <path class="red" d="M1105 432l13.500-32.500 12.500-35 13-23 13 23 13 33 13 34.500z"/>
                                    <path class="curve" d="M1105 432l13.500-9 12.500-10 13-8 13 8 13 10 13 9M1144.500 342v90"/>
                                    <path class="axis" d="M1098 432.500h92"/>
                                    <path class="support" d="M1144.500 433l-5 8.500h10z"/>
                                    <g class="value"><text x="1144" y="339">-5.09</text><text x="1144" y="403">-1.52</text></g>
                                </g>

                                <text class="caption" x="889" y="486">My max, My min Wood core [kNm]</text>
                                <path class="axis" d="M882.500 487.500V621.500M877 487.500h6M877 514.500h6M877 567.500h6M877 594.500h6M877 621.500h6"/>
                                <g class="scale"><text x="876" y="491">-5.60</text><text x="876" y="517">-2.80</text><text x="876" y="571">2.80</text><text x="876" y="598">5.60</text><text x="876" y="624">8.40</text></g>
                                <path class="blue" d="M882 541Q989 680 1095 541zM1126 541q5 6 10 2l8-2zM1144 541q13 4 20 0zM1188 541q70 57 139 0z"/>
                                <path class="red" d="M1055 541l31-12 13-8 6-7 14 13 12 10 13 4zM1144 541l13-6 14-25 12.500-18.500C1230 521 1256 533 1327 541z"/>
                                <path class="curve" d="M882 541Q970 568 1055 541M1095 541l5-6q3-3 8-1l12 3q4 2 6 4 5 6 10 2l8-2q13 4 20 0l7-2h13l4 2M1105.500 514v27M1183.500 492v49M969.500 541v13M989.500 541v69M1131.500 541v3M1157.500 541v2M1259.500 541v28"/>
                                <path class="zero" d="M882 541h445"/>
                                <path class="support" d="M882.500 542l-5 8.500h10zM1327.500 542l-5 7.500h10zM1322 552h11"/>
                                <g class="value"><text x="1105" y="511">-2.86</text><text x="1105" y="530">-0.84</text><text x="1183" y="489">-5.20</text><text x="1183" y="536">-0.27</text><text x="1131" y="554">0.43</text><text x="1157" y="552">0.23</text><text x="970" y="563">1.41</text><text x="989" y="620">7.32</text><text x="1260" y="579">3.03</text></g>

                                <text class="caption" x="889" y="672">My max, My min Reinforcement on the right [kNm]</text>
                                <use href="#reinforcement" y="349"/>
                            </svg>
                        </article>
                    </div>
                    <div class="scroll vertical pale">
                        <button aria-label="Scroll up"><svg width="8" height="6"><use href="#chev"/></svg></button>
                        <span style="flex-grow: 235"></span>
                        <span class="thumb" style="flex-grow: 27"></span>
                        <span style="flex-grow: 284"></span>
                        <button class="down" aria-label="Scroll down"><svg width="8" height="6"><use href="#chev"/></svg></button>
                    </div>
                    <div class="scroll horizontal off">
                        <button disabled class="left" aria-label="Scroll left"><svg width="8" height="6"><use href="#chev"/></svg></button>
                        <span style="flex-grow: 1"></span>
                        <button disabled class="right" aria-label="Scroll right"><svg width="8" height="6"><use href="#chev"/></svg></button>
                    </div>
                </div>
            </div>

            <div class="grip-bar"><svg width="11" height="12" viewBox="0 0 11 12"><path d="M8 0h2v2H8zM8 5h2v2H8zM4 5h2v2H4zM8 10h2v2H8zM4 10h2v2H4zM0 10h2v2H0z" fill="#aaa"/></svg></div>

            <nav class="sheet-tabs">
                <a href="#spans"><svg width="14" height="14"><use href="#table"/></svg>Spans/Segments</a>
                <a href="#support"><svg width="14" height="14"><use href="#table"/></svg>support</a>
                <a href="#joints"><svg width="14" height="14"><use href="#table"/></svg>Joints</a>
                <a href="#holzkern"><svg width="14" height="14"><use href="#table"/></svg>Qs Holzkern</a>
                <a href="#qsverst"><svg width="14" height="14"><use href="#table"/></svg>Qs Verst.</a>
                <a href="#links"><svg width="14" height="14"><use href="#table"/></svg>Verst. links</a>
                <a href="#rechts"><svg width="14" height="14"><use href="#table"/></svg>Verst. rechts</a>
                <a href="#mittel"><svg width="14" height="14"><use href="#table"/></svg>Verbindungsmittel</a>
                <a href="#sections"><svg width="14" height="14"><use href="#table"/></svg>Sections</a>
                <a href="#loads" class="active"><svg width="14" height="14"><use href="#table"/></svg>Loads</a>
                <button aria-label="Close"><svg width="9" height="8" viewBox="0 0 9 8"><path d="M1 .5l7 7M8 .5l-7 7" stroke="#000" stroke-width="1.800"/></svg></button>
            </nav>
        </section>
    </main>
    <footer class="statusbar"></footer>
</body>
</html>
```
FILE: styles.css
```css
* {
    box-sizing: border-box;
}
body {
    margin: 0;
    height: 100vh;
    display: flex;
    flex-direction: column;
    overflow: hidden;
    background: #f0f0f0;
    color: #000;
    font: 11px/16px "Liberation Sans", Arial, sans-serif;
    white-space: nowrap;
}
h1, h2, h3, p, ul {
    margin: 0;
    padding: 0;
    font-size: inherit;
    font-weight: normal;
}
ul {
    list-style: none;
}
a {
    color: inherit;
    text-decoration: none;
}
svg {
    display: block;
    flex: none;
}
button {
    margin: 0;
    padding: 0;
    border: 0;
    background: none;
    color: inherit;
    font: inherit;
    display: flex;
    align-items: center;
    justify-content: center;
}
input, select {
    margin: 0;
    border: 0;
    padding: 0;
    border-radius: 0;
    background: #fff;
    color: #000;
    font: inherit;
}
.sprite {
    position: absolute;
    width: 0;
    height: 0;
}
input[type="checkbox"] {
    appearance: none;
    flex: none;
    width: 13px;
    height: 13px;
    border: 1px solid #333;
    background: #fff;
}
input[type="checkbox"]:checked::before {
    content: "";
    display: block;
    width: 9px;
    height: 5px;
    margin: 1px 0 0 1px;
    border: solid #333;
    border-width: 0 0 1px 1px;
    transform: rotate(-45deg);
}

/* title bar */
.titlebar {
    flex: none;
    height: 34px;
    display: flex;
    align-items: center;
    background: #2b579a;
    color: #fff;
}
.quick {
    display: flex;
    align-items: center;
    gap: 7px;
    padding-left: 6px;
}
.q-new {
    margin: 0 2px 0 4px;
}
.quick .dim {
    gap: 7px;
    color: #8fa8cd;
}
.quick .word {
    font-size: 15px;
    font-weight: bold;
}
.q-more {
    margin-left: 6px;
}
.window-title {
    flex: 1;
    text-align: center;
    font-family: "Noto Sans", sans-serif;
}
.window-buttons {
    display: flex;
}
.window-buttons button {
    width: 46px;
    height: 34px;
}

/* ribbon */
.ribbon-tabs {
    flex: none;
    height: 28px;
    display: flex;
    background: #f3f1ef;
    color: #444;
    font-size: 14px;
    line-height: 29px;
}
.ribbon-tabs a {
    padding: 0 19px;
}
.ribbon-tabs .active {
    font-weight: bold;
    border-bottom: 3px solid #2b579a;
    background: #f1f1f1;
}
.ribbon-help {
    margin: 0 3px 6px auto;
}
.ribbon {
    flex: none;
    height: 99px;
    padding-top: 4px;
    display: flex;
    border-bottom: 1px solid #d2d0ce;
    background: #f1f1f1;
    color: #444;
    font-size: 12px;
}
.group {
    flex: none;
    display: flex;
    flex-direction: column;
    background: linear-gradient(#b4b2b0, #b4b2b0) right top / 1px 90px no-repeat;
}
.group-body {
    flex: 1;
    display: flex;
    align-items: flex-start;
    padding-left: 8px;
}
.group h2 {
    text-align: center;
}
.group .off, .ribbon button:disabled {
    color: #a9a9a9;
}
.g-input { width: 259px; }
.g-actions { width: 76px; }
.g-calc { width: 196px; }
.g-graphics { width: 75px; }
.g-vis { width: 151px; }
.g-view { width: 94px; }
.g-filter { width: 79px; }
.g-output { width: 165px; }
.g-frilo { width: 134px; }
.g-input .group-body { gap: 8px; padding-left: 7px; }
.g-graphics .group-body { padding-left: 4px; }
.g-calc .group-body { gap: 7px; padding-left: 7px; }
.g-frilo .group-body { gap: 7px; }
.big {
    flex-direction: column;
    padding-top: 5px;
    line-height: 16px;
}
.big > svg:first-child {
    margin-bottom: 2px;
}
.big svg {
    color: #777;
}
.big .drop {
    margin-top: 5px;
}
.big span svg {
    display: inline-block;
    margin-left: 2px;
}
.rows {
    padding: 2px 0 0 4px;
}
.rows button {
    height: 24px;
    gap: 4px;
}
.rows.tall {
    padding: 14px 0 0;
}
.rows .gap {
    margin-left: 2px;
}
.icon-grid {
    padding-top: 6px;
    display: grid;
    grid-template-columns: repeat(3, 22px);
    grid-auto-rows: 32px;
}
.ribbon .letter:disabled {
    font-size: 14px;
    color: #888;
}
.letter sup {
    font-size: 11px;
    line-height: 8px;
    margin-bottom: 6px;
}
.toggles {
    display: grid;
    grid-auto-columns: 22px;
    grid-auto-rows: 23px;
    row-gap: 1px;
    padding-top: 2px;
}
.toggles button {
    background: #c6c4c2;
}
.toggles.two {
    grid-template-columns: 22px 22px;
    margin-left: 2px;
}
.toggles.one {
    padding-top: 14px;
}
.toggles.lone {
    padding-top: 26px;
}
.toggles.plain {
    margin-left: 3px;
}
.toggles.plain button {
    background: none;
}
.toggles.plain .on {
    background: #c6c4c2;
}
.short-rule {
    width: 1px;
    height: 64px;
    margin: 6px 4px 0;
    background: #b4b2b0;
}
.ribbon-fold {
    align-self: flex-end;
    margin: 0 7px 4px auto;
}

main {
    flex: 1;
    min-height: 0;
    display: flex;
    border-bottom: 1px solid #c6c6c6;
}
.statusbar {
    flex: none;
    height: 21px;
    background: #f3f1ef;
}

/* scroll bars */
.scroll {
    display: flex;
    background: #f0f0f0;
    color: #555;
}
.scroll.vertical {
    flex-direction: column;
}
.scroll button {
    flex: none;
    width: 16px;
    height: 17px;
}
.thumb {
    background: #cdcdcd;
}
.scroll .down svg {
    transform: rotate(180deg);
}
.scroll .left svg {
    transform: rotate(-90deg);
}
.scroll .right svg {
    transform: rotate(90deg);
}
.scroll.off {
    color: #bbb;
}

/* properties panel */
.properties {
    flex: none;
    width: 305px;
    display: flex;
    flex-direction: column;
    padding-bottom: 95px;
    background: #fff;
}
.prop-head {
    display: flex;
    justify-content: space-between;
    align-items: center;
    flex: none;
    height: 21px;
    margin: 2px 2px 0;
    padding: 0 5px 0 3px;
    border: 1px solid #7ea9e6;
    border-radius: 2px;
    background: #eff6fe;
}
.prop-nav {
    flex: none;
    height: 93px;
    display: flex;
    align-items: flex-start;
    padding: 0 3px 0 12px;
}
.prop-nav ul {
    flex: 1;
}
.prop-nav li {
    position: relative;
    height: 16px;
    padding-left: 9px;
    background: repeating-linear-gradient(90deg, #888 0 1px, transparent 1px 2px) 0 8px / 9px 1px no-repeat;
}
.prop-nav li + li::before, .tree li::before {
    content: "";
    position: absolute;
    left: 0;
    top: -8px;
    height: 16px;
    border-left: 1px dotted #888;
}
.prop-nav li a {
    display: inline-block;
    padding: 0 3px;
}
.prop-nav .current {
    padding-right: 6px;
    background: #9fb4e0;
    color: #fff;
}
.prop-nav button {
    margin: 6px 0 0 4px;
}
.prop-scroll {
    flex: 1;
    min-height: 0;
    display: flex;
    overflow: hidden;
}
.prop-grid {
    flex: 1;
}
.prop-grid h3 {
    height: 25px;
    display: flex;
    align-items: center;
    justify-content: space-between;
    padding: 0 3px;
    border-bottom: 1px solid #ccc;
    background: #e5e5e5;
    color: #555a66;
    font-size: 12px;
}
.prop {
    height: 21px;
    display: grid;
    grid-template-columns: 191px 1fr;
    border-bottom: 1px solid #d0d0d0;
}
.prop label {
    padding: 2px 0 2px 3px;
    border-right: 1px solid #ccc;
    height: 20px;
}
.prop.sub label {
    text-align: right;
    padding-right: 6px;
}
.prop.pair label {
    display: flex;
    justify-content: space-between;
    padding-right: 6px;
}
.prop input {
    justify-self: end;
    align-self: center;
    margin-right: 3px;
}
.prop select {
    appearance: none;
    margin-left: 4px;
    background: url("data:image/svg+xml,%3Csvg xmlns='http://www.w3.org/2000/svg' width='17' height='20'%3E%3Cpath fill='%23f0f0f0' d='M0 0h17v20H0z'/%3E%3Cpath d='M6 9h5l-2.500 3z'/%3E%3C/svg%3E") right top no-repeat #fff;
}
.prop-scroll .scroll {
    width: 15px;
    margin: 0 1px;
}
.prop-scroll .scroll button {
    width: 15px;
}

/* document workspace */
.workspace {
    flex: 1;
    min-width: 0;
    margin-left: 3px;
    display: flex;
    flex-direction: column;
}
.view-tabs {
    flex: none;
    height: 23px;
    display: flex;
    align-items: flex-end;
    padding-left: 6px;
    background: #bbcde6;
}
.view-tabs a {
    padding: 2px 7px;
    border-radius: 3px 3px 0 0;
    margin-right: 8px;
}
.view-tabs .active {
    padding: 2px 8px;
    background: #f3f8fe;
}
.toolbar {
    flex: none;
    height: 26px;
    display: flex;
    background: #fbfbfb;
    font-family: "Open Sans", sans-serif;
}
.tools {
    display: flex;
    align-items: center;
    padding: 0 1px 0 4px;
    border-right: 1px solid #bbb;
    background: linear-gradient(#fdfdfd, #ededed);
}
.tools::before {
    content: "";
    width: 3px;
    height: 16px;
    margin-right: 4px;
    background: repeating-linear-gradient(#bbb 0 2px, transparent 2px 4px);
}
.tools button {
    width: 23px;
    height: 23px;
}
.tools .on {
    border: 1px solid #0078d7;
    background: #fff;
}
.tools .arrow {
    width: 10px;
}
.tools .wide {
    width: 14px;
}
.tools button:disabled {
    color: #aaa;
}
.tools i {
    width: 1px;
    height: 16px;
    margin: 0 2px;
    background: #c0c0c0;
}
.tools input {
    height: 23px;
    padding-left: 3px;
}
.zoom {
    width: 48px;
}
.page-no {
    width: 34px;
}
.tools label {
    margin: 0 5px 0 3px;
}
.of {
    margin: 0 1px 0 6px;
}
.tools .start-no {
    width: 30px;
    border: 1px solid #555;
}
.tools .text {
    width: auto;
    padding: 0 7px;
}
.viewer {
    flex: 1;
    min-height: 0;
    display: flex;
    border-bottom: 1px solid #d0d0d0;
}
.side-pane {
    flex: none;
    width: 239px;
    display: flex;
    flex-direction: column;
    font-family: Lato, sans-serif;
}
.side-tabs {
    flex: none;
    height: 22px;
    display: flex;
    align-items: flex-end;
    padding-left: 2px;
}
.side-tabs a {
    height: 19px;
    padding: 1px 5px 0;
    border: 1px solid #dcdcdc;
}
.side-tabs .active {
    height: 22px;
    padding: 1px 7px 0;
    border-bottom: 0;
    background: #fff;
}
.side-frame {
    flex: 1;
    min-height: 0;
    padding: 0 1px 2px 3px;
    margin-bottom: 1px;
    border: 1px solid #dcdcdc;
    border-top: 0;
    background: #fff;
    display: flex;
}
.tree-box {
    flex: 1;
    min-width: 0;
    display: flex;
    flex-direction: column;
    padding: 1px;
    border: 1px solid #828790;
    overflow: hidden;
}
.tree {
    flex: 1;
    padding-left: 12px;
    overflow: hidden;
}
.tree ul {
    padding-left: 19px;
}
.tree li {
    position: relative;
}
/* the trunk stops at the middle of the last row */
.tree li::before {
    top: 0;
    height: auto;
    bottom: 0;
}
.tree > li:first-child::before {
    top: 8px;
}
.tree li:last-child::before {
    bottom: auto;
    height: 8px;
}
.node {
    height: 16px;
    display: flex;
    align-items: center;
    padding-left: 10px;
    background: repeating-linear-gradient(90deg, #888 0 1px, transparent 1px 2px) 0 8px / 10px 1px no-repeat;
}
.node button {
    position: relative;
    flex: none;
    width: 9px;
    height: 9px;
    margin: 0 5px 0 -14px;
    border: 1px solid #919191;
    border-radius: 1px;
    background: #f4f4f4;
    color: #2b4fa0;
    line-height: 7px;
}
.node label {
    padding: 0 2px;
}
.node .picked {
    background: #0078d7;
    color: #fff;
}
.tree-box .scroll {
    flex: none;
    height: 15px;
}
.tree-box .scroll button {
    height: 15px;
}

.sheet-area {
    flex: 1;
    min-width: 0;
    margin-left: 10px;
    display: grid;
    grid-template-columns: 18px 1fr 16px;
    grid-template-rows: 22px 1fr 16px;
}
.ruler-top {
    grid-column: 2;
    display: flex;
    justify-content: center;
    padding: 4px 0;
}
.ruler-top svg, .ruler-left svg {
    background: #fff;
    font-family: "Open Sans", sans-serif;
    font-size: 9px;
    text-anchor: middle;
    shape-rendering: crispEdges;
}
.ruler-left {
    grid-column: 1;
    grid-row: 2;
    min-height: 0;
}
.canvas {
    grid-column: 2;
    grid-row: 2;
    min-height: 0;
    overflow: hidden;
    display: flex;
    justify-content: center;
    background: #a0a0a0;
}
.page {
    flex: none;
    width: 675px;
    padding: 6px 0 0 85px;
    border: solid #000;
    border-width: 0 1px;
    background: #fff;
    box-shadow: 0 0 10px #333;
    font-family: Roboto, sans-serif;
}
.page h1 {
    color: #0563b1;
    font-weight: bold;
}
.page h2 {
    margin-top: 1px;
    font-weight: bold;
    font-size: 10px;
}
.page p {
    font-size: 10px;
}
.charts {
    margin: 1px 0 0 12px;
    font: 8px Roboto, sans-serif;
    fill: #222;
}
.scale {
    text-anchor: end;
}
.value {
    text-anchor: middle;
}
.axis, .curve, .support, .zero {
    fill: none;
    stroke: #999;
}
.curve {
    stroke: #4a3f4a;
    stroke-opacity: .6;
}
.red {
    fill: #ffbfbf;
    stroke: #8a6a6a;
    stroke-width: .7;
}
.blue {
    fill: #bfbfff;
    stroke: #66668a;
    stroke-width: .7;
}
.zero {
    stroke: #a89a98;
}
.support {
    stroke: #8fcf8f;
}
.pale {
    grid-column: 3;
    grid-row: 2;
}
.sheet-area .horizontal {
    grid-column: 2;
    grid-row: 3;
}
.grip-bar {
    flex: none;
    height: 25px;
    display: flex;
    justify-content: flex-end;
    align-items: flex-end;
    padding: 0 3px 6px 0;
}
.sheet-tabs {
    flex: none;
    height: 24px;
    display: flex;
    align-items: flex-end;
    padding: 0 4px 0 8px;
    background: #bbcde6;
}
.sheet-tabs a {
    height: 21px;
    display: flex;
    align-items: center;
    gap: 9px;
    padding: 0 9px 2px 4px;
    margin-right: 9px;
    border-radius: 3px 3px 0 0;
}
.sheet-tabs .active {
    background: #f3f8fe;
}
.sheet-tabs button {
    height: 24px;
    margin-left: auto;
}
```
